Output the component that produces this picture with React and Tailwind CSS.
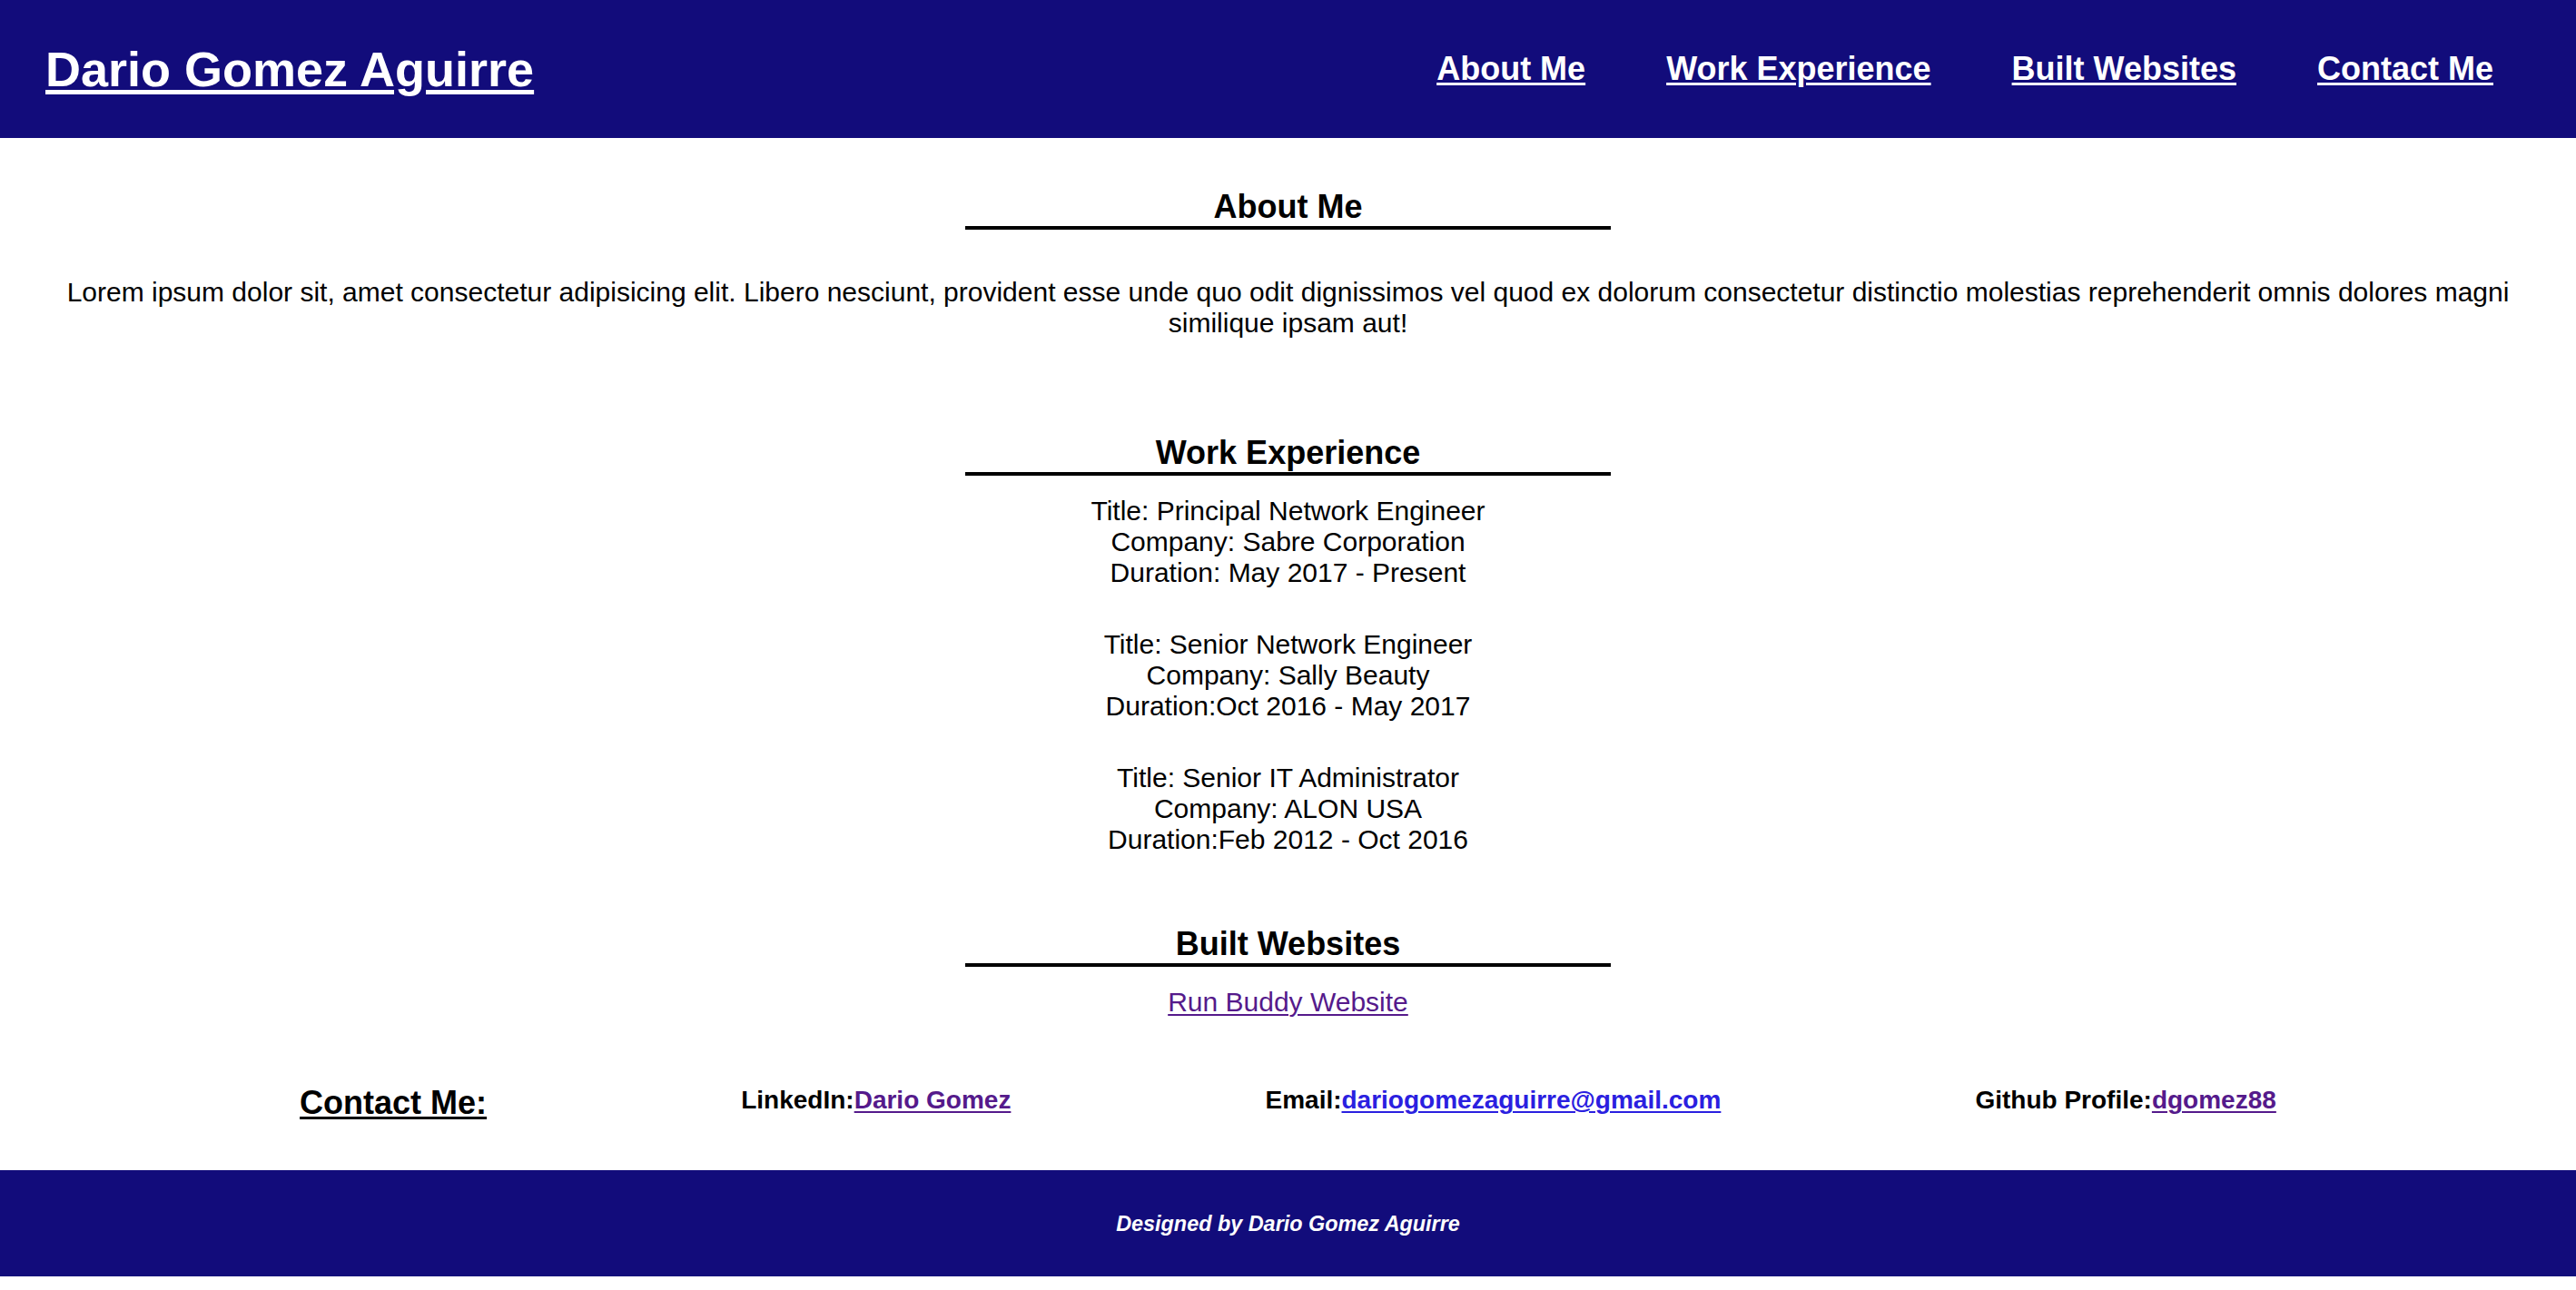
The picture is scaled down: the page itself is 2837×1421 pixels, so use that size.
export default function App() {
  const font = { fontFamily: '"Liberation Sans", Arial, sans-serif' };
  const jobs = [
    ["Title: Principal Network Engineer", "Company: Sabre Corporation", "Duration: May 2017 - Present"],
    ["Title: Senior Network Engineer", "Company: Sally Beauty", "Duration:Oct 2016 - May 2017"],
    ["Title: Senior IT Administrator", "Company: ALON USA", "Duration:Feb 2012 - Oct 2016"],
  ];
  return (
    <div className="bg-white text-black font-['Liberation_Sans',Arial,sans-serif]" style={font}>
      <header className="h-[152px] bg-[#120c7b] flex items-center justify-between pl-[50px] pr-[91px]">
        <a href="#" className="text-white text-[54px] font-bold leading-[62px] underline decoration-[5px] underline-offset-[4px]">
          Dario Gomez Aguirre
        </a>
        <nav className="flex gap-[89px]">
          <a href="#about" className="text-white text-[36px] font-bold leading-[42px] underline decoration-[3px] underline-offset-[3px]">About Me</a>
          <a href="#work" className="text-white text-[36px] font-bold leading-[42px] underline decoration-[3px] underline-offset-[3px]">Work Experience</a>
          <a href="#built" className="text-white text-[36px] font-bold leading-[42px] underline decoration-[3px] underline-offset-[3px]">Built Websites</a>
          <a href="#contact" className="text-white text-[36px] font-bold leading-[42px] underline decoration-[3px] underline-offset-[3px]">Contact Me</a>
        </nav>
      </header>

      <main className="flex flex-col items-center">
        <h2 id="about" className="mt-[55px] w-[711px] text-center text-[36px] font-bold leading-[42px] border-b-4 border-black">About Me</h2>
        <p className="mt-[52px] px-[50px] text-center text-[30px] leading-[34px]">
          Lorem ipsum dolor sit, amet consectetur adipisicing elit. Libero nesciunt, provident esse unde quo odit dignissimos vel quod ex dolorum consectetur distinctio molestias reprehenderit omnis dolores magni similique ipsam aut!
        </p>

        <h2 id="work" className="mt-[105px] w-[711px] text-center text-[36px] font-bold leading-[42px] border-b-4 border-black">Work Experience</h2>
        <div className="mt-[22px] flex flex-col gap-[45px]">
          {jobs.map((j, i) => (
            <div key={i} className="text-center text-[30px] leading-[34px]">
              {j.map((l, k) => (
                <div key={k}>{l}</div>
              ))}
            </div>
          ))}
        </div>

        <h2 id="built" className="mt-[77px] w-[711px] text-center text-[36px] font-bold leading-[42px] border-b-4 border-black">Built Websites</h2>
        <a href="#" className="mt-[22px] text-[30px] leading-[34px] text-[#551a8b] underline decoration-[2px] underline-offset-[3px]">Run Buddy Website</a>

        <section id="contact" className="mt-[73px] w-full px-[50px] flex items-start justify-evenly">
          <h3 className="text-[36px] font-bold leading-[42px] underline decoration-[3px] underline-offset-[3px]">Contact Me:</h3>
          <div className="mt-[2px] text-[28px] font-bold leading-[32px]">
            LinkedIn:<a href="#" className="text-[#551a8b] underline decoration-[2px] underline-offset-[3px]">Dario Gomez</a>
          </div>
          <div className="mt-[2px] text-[28px] font-bold leading-[32px]">
            Email:<a href="#" className="text-[#2a20e0] underline decoration-[2px] underline-offset-[3px]">dariogomezaguirre@gmail.com</a>
          </div>
          <div className="mt-[2px] text-[28px] font-bold leading-[32px]">
            Github Profile:<a href="#" className="text-[#551a8b] underline decoration-[2px] underline-offset-[3px]">dgomez88</a>
          </div>
        </section>
      </main>

      <footer className="mt-[53px] h-[117px] bg-[#120c7b] flex items-center justify-center">
        <p className="mt-[2px] text-white text-[23.4px] font-bold italic leading-[27px]">Designed by Dario Gomez Aguirre</p>
      </footer>
    </div>
  );
}
